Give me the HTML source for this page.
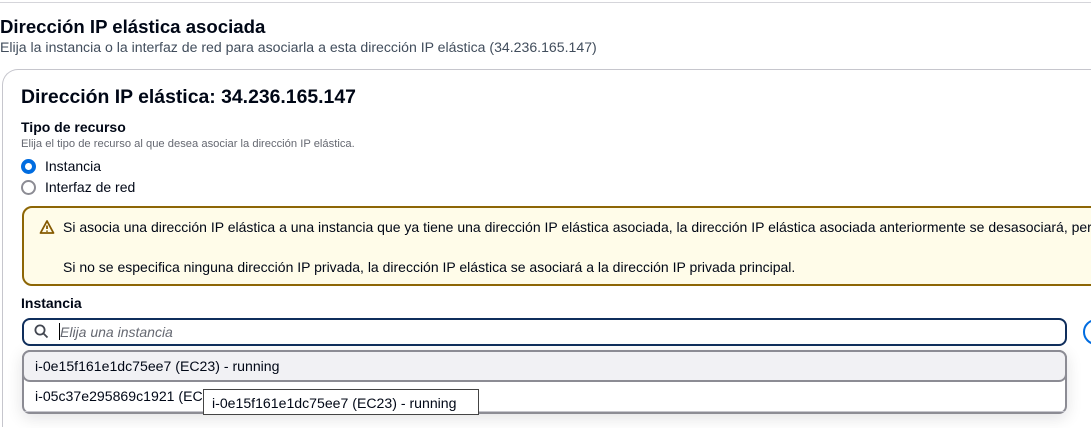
<!DOCTYPE html>
<html><head><meta charset="utf-8"><style>
*{box-sizing:border-box;margin:0;padding:0}
html,body{width:1091px;height:428px;overflow:hidden}
body{background:#fff;font-family:"Liberation Sans",sans-serif;color:#000716;position:relative}
.a{position:absolute;white-space:nowrap}
</style></head><body>
<div class="a" style="left:0;top:2px;width:1091px;height:1px;background:#d5d5da"></div>
<div class="a" style="left:0;top:16px;font-size:18.6px;font-weight:bold">Dirección IP elástica asociada</div>
<div class="a" style="left:0;top:39px;font-size:14.1px;color:#414d5c">Elija la instancia o la interfaz de red para asociarla a esta dirección IP elástica (34.236.165.147)</div>
<div class="a" style="left:2px;top:69px;width:1200px;height:358px;border:1px solid #c6c6cd;border-bottom:none;border-radius:16px 16px 0 0"></div>
<div class="a" style="left:21px;top:86px;font-size:19.4px;font-weight:bold">Dirección IP elástica: 34.236.165.147</div>
<div class="a" style="left:21px;top:119px;font-size:14px;font-weight:bold">Tipo de recurso</div>
<div class="a" style="left:21px;top:138px;font-size:11.2px;color:#656871">Elija el tipo de recurso al que desea asociar la dirección IP elástica.</div>
<div class="a" style="left:21px;top:159px;width:15px;height:15px;border-radius:50%;border:4.5px solid #006ce0;background:#fff"></div>
<div class="a" style="left:45px;top:158px;font-size:14px">Instancia</div>
<div class="a" style="left:21px;top:180px;width:15px;height:15px;border-radius:50%;border:2px solid #8c8c94"></div>
<div class="a" style="left:45px;top:179px;font-size:14px">Interfaz de red</div>
<div class="a" style="left:22px;top:206px;width:1090px;height:80px;border:2px solid #8d6605;border-radius:10px;background:#fffce9"></div>
<svg class="a" style="left:39px;top:219px" width="16" height="16" viewBox="0 0 16 16"><path d="M8 2L1.5 14h13z" fill="none" stroke="#855900" stroke-width="1.8" stroke-linejoin="round"/><path d="M8 6.5v3.5M8 11.5v1.3" stroke="#855900" stroke-width="1.8"/></svg>
<div class="a" style="left:63px;top:219px;font-size:14px">Si asocia una dirección IP elástica a una instancia que ya tiene una dirección IP elástica asociada, la dirección IP elástica asociada anteriormente se desasociará, pero</div>
<div class="a" style="left:63px;top:259px;font-size:14px">Si no se especifica ninguna dirección IP privada, la dirección IP elástica se asociará a la dirección IP privada principal.</div>
<div class="a" style="left:21px;top:295px;font-size:14px;font-weight:bold">Instancia</div>
<div class="a" style="left:22px;top:318px;width:1045px;height:28px;border:2px solid #0f2e5c;border-radius:8px"></div>
<svg class="a" style="left:34px;top:324px" width="15" height="15" viewBox="0 0 15 15"><circle cx="6" cy="6" r="4.6" fill="none" stroke="#424650" stroke-width="1.8"/><path d="M9.5 9.5L13.5 13.5" stroke="#424650" stroke-width="1.8"/></svg>
<div class="a" style="left:59px;top:323px;width:1px;height:17px;background:#000"></div>
<div class="a" style="left:60px;top:324px;font-size:14px;font-style:italic;color:#656871">Elija una instancia</div>
<div class="a" style="left:1083px;top:319px;width:26px;height:26px;border-radius:50%;border:2px solid #006ce0"></div>
<div class="a" style="left:22px;top:350px;width:1045px;height:64px;border:2px solid #8c8c94;border-radius:8px;background:#fff;box-shadow:0 4px 16px rgba(0,7,22,.12)"></div>
<div class="a" style="left:24px;top:411px;width:1041px;height:1px;background:#c6c6cd"></div>
<div class="a" style="left:22px;top:350px;width:1045px;height:32px;border:2px solid #8c8c94;border-radius:8px;background:#f1f1f4"></div>
<div class="a" style="left:35px;top:358px;font-size:14.1px">i-0e15f161e1dc75ee7 (EC23) - running</div>
<div class="a" style="left:35px;top:388px;font-size:14.1px">i-05c37e295869c1921 (EC23) - running</div>
<div class="a" style="left:203px;top:389px;width:276px;height:26px;border:1px solid #444;background:#fff;font-size:14.1px;padding:5px 0 0 8px">i-0e15f161e1dc75ee7 (EC23) - running</div>
</body></html>
